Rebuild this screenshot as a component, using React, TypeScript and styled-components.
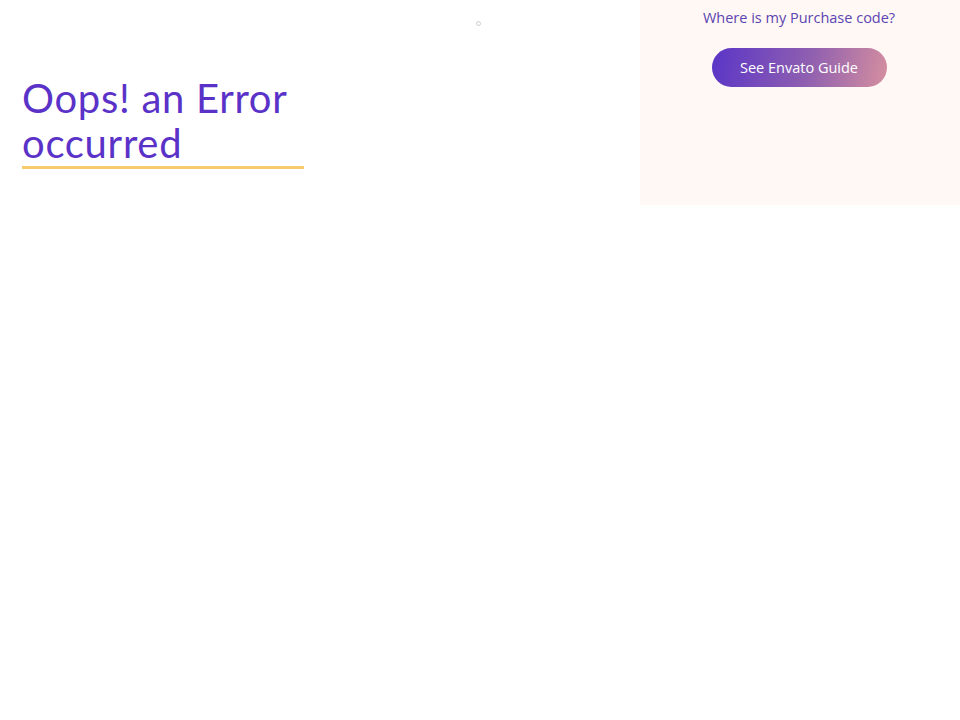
import React from 'react';
import styled, { createGlobalStyle } from 'styled-components';

const GlobalStyle = createGlobalStyle`
  html, body {
    margin: 0;
    padding: 0;
    background: #ffffff;
    font-family: "Open Sans", "Noto Sans", sans-serif;
  }
`;

const Page = styled.div`
  display: flex;
  align-items: flex-start;
  width: 960px;
`;

const Main = styled.div`
  position: relative;
  flex: 0 0 640px;
  padding: 76px 0 0 22px;
  box-sizing: border-box;
`;

const Spinner = styled.span`
  position: absolute;
  left: 476px;
  top: 21px;
  width: 3px;
  height: 3px;
  border: 1px solid #c9cdd3;
  border-radius: 50%;
`;

const Title = styled.h1`
  display: inline-block;
  margin: 0;
  width: 282px;
  border-bottom: 3px solid #f7cb6b;
  font-family: "Lato", "Open Sans", sans-serif;
  font-weight: 400;
  font-size: 40px;
  letter-spacing: 0.7px;
  line-height: 45px;
  color: #5a32c8;
`;

const Side = styled.aside`
  flex: 0 0 320px;
  height: 205px;
  background: #fff8f4;
  display: flex;
  flex-direction: column;
  align-items: center;
  padding-top: 8px;
  box-sizing: border-box;
`;

const HelpText = styled.p`
  margin: 0;
  font-size: 14.5px;
  line-height: 20px;
  color: #5b45b2;
  transform: translateX(-1px);
`;

const GuideButton = styled.button`
  margin-top: 20px;
  width: 175px;
  height: 39px;
  border: none;
  border-radius: 20px;
  background: linear-gradient(100deg, #5a35c7 0%, #8f5fb0 55%, #d58f9f 100%);
  color: #ffffff;
  font-family: "Open Sans", "Noto Sans", sans-serif;
  font-size: 14.5px;
  cursor: pointer;
  transform: translateX(-1px);
`;

const App: React.FC = () => (
  <>
    <GlobalStyle />
    <Page>
      <Main>
        <Spinner />
        <Title>Oops! an Error occurred</Title>
      </Main>
      <Side>
        <HelpText>Where is my Purchase code?</HelpText>
        <GuideButton>See Envato Guide</GuideButton>
      </Side>
    </Page>
  </>
);

export default App;
